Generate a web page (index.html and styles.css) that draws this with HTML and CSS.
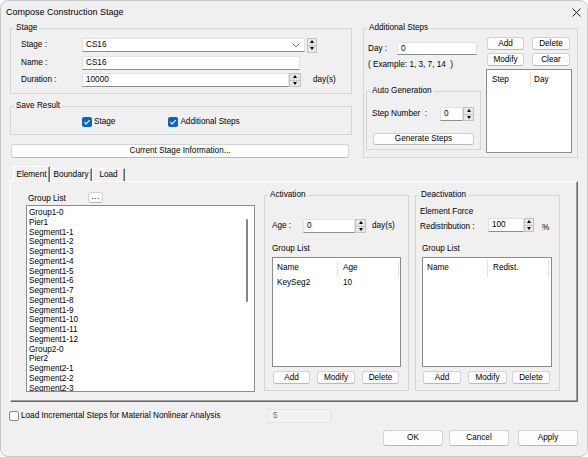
FILE: index.html
```html
<!DOCTYPE html>
<html>
<head>
<meta charset="utf-8">
<title>Compose Construction Stage</title>
<link rel="stylesheet" href="styles.css">
</head>
<body>
<div class="window">
  <div class="titlebar">
    <span class="title">Compose Construction Stage</span>
    <svg class="close" width="9" height="9" viewBox="0 0 9 9"><path d="M0.5 0.5 L8.5 8.5 M8.5 0.5 L0.5 8.5" stroke="#1a1a1a" stroke-width="1" fill="none"/></svg>
  </div>

  <div class="top">
    <div class="left-col">
      <fieldset class="grp stage-grp">
        <legend>Stage</legend>
        <div class="stage-body">
          <div class="frow">
            <span class="flabel">Stage :</span>
            <div class="input select">CS16<svg class="chev" width="8" height="5" viewBox="0 0 8 5"><path d="M0.5 0.5 L4 4 L7.5 0.5" stroke="#7a7a7a" stroke-width="1" fill="none"/></svg></div>
            <div class="spin spin-stage"><span class="up"></span><span class="dn"></span></div>
          </div>
          <div class="frow">
            <span class="flabel">Name :</span>
            <div class="input name-in">CS16</div>
          </div>
          <div class="frow">
            <span class="flabel">Duration :</span>
            <div class="input dur-in">10000</div>
            <div class="spin spin-dur"><span class="up"></span><span class="dn"></span></div>
            <span class="unit">day(s)</span>
          </div>
        </div>
      </fieldset>

      <fieldset class="grp save-grp">
        <legend>Save Result</legend>
        <div class="checks">
          <span class="chk chk-stage"><span class="cbox on"><svg width="10" height="10" viewBox="0 0 10 10"><path d="M2.4 5.2 L4.2 7 L7.7 3.2" stroke="#fff" stroke-width="1.2" fill="none"/></svg></span>Stage</span>
          <span class="chk chk-add"><span class="cbox on"><svg width="10" height="10" viewBox="0 0 10 10"><path d="M2.4 5.2 L4.2 7 L7.7 3.2" stroke="#fff" stroke-width="1.2" fill="none"/></svg></span>Additional Steps</span>
        </div>
      </fieldset>

      <button class="btn info-btn">Current Stage Information...</button>
    </div>

    <fieldset class="grp add-grp">
      <legend>Additional Steps</legend>
      <div class="add-body">
        <div class="add-left">
          <div class="day-row"><span class="day-lbl">Day :</span><div class="input day-in">0</div></div>
          <div class="example">( Example: 1, 3, 7, 14&nbsp; )</div>
          <fieldset class="grp auto-grp">
            <legend>Auto Generation</legend>
            <div class="step-row">
              <span class="step-lbl">Step Number&nbsp; :</span>
              <div class="input step-in">0</div>
              <div class="spin spin-step"><span class="up"></span><span class="dn"></span></div>
            </div>
            <button class="btn gen-btn">Generate Steps</button>
          </fieldset>
        </div>
        <div class="add-right">
          <div class="btn-grid">
            <button class="btn">Add</button>
            <button class="btn">Delete</button>
            <button class="btn">Modify</button>
            <button class="btn">Clear</button>
          </div>
          <div class="list step-list">
            <div class="lv-head">
              <span class="col sc1">Step</span>
              <span class="col sc2">Day</span>
            </div>
          </div>
        </div>
      </div>
    </fieldset>
  </div>

  <div class="tabs">
    <div class="tab active">Element</div>
    <div class="tab t-boundary">Boundary</div>
    <div class="tab t-load">Load</div>
  </div>

  <div class="panel">
    <div class="glist-col">
      <div class="glist-head"><span class="gl-title">Group List</span><button class="btn dots">...</button></div>
      <div class="list glist">
        <div class="items">
          <div>Group1-0</div>
          <div>Pier1</div>
          <div>Segment1-1</div>
          <div>Segment1-2</div>
          <div>Segment1-3</div>
          <div>Segment1-4</div>
          <div>Segment1-5</div>
          <div>Segment1-6</div>
          <div>Segment1-7</div>
          <div>Segment1-8</div>
          <div>Segment1-9</div>
          <div>Segment1-10</div>
          <div>Segment1-11</div>
          <div>Segment1-12</div>
          <div>Group2-0</div>
          <div>Pier2</div>
          <div>Segment2-1</div>
          <div>Segment2-2</div>
          <div>Segment2-3</div>
        </div>
        <div class="sb"><div class="thumb"></div></div>
      </div>
    </div>

    <fieldset class="grp act-grp">
      <legend>Activation</legend>
      <div class="act-body">
        <div class="age-row">
          <span class="age-lbl">Age :</span>
          <div class="input age-in">0</div>
          <div class="spin spin-age"><span class="up"></span><span class="dn"></span></div>
          <span class="unit2">day(s)</span>
        </div>
        <div class="gl-label">Group List</div>
        <div class="list lv">
          <div class="lv-head">
            <span class="col c1">Name</span>
            <span class="col c2">Age</span>
          </div>
          <div class="lv-row"><span class="cell c1">KeySeg2</span><span class="cell c2">10</span></div>
        </div>
        <div class="btn-row">
          <button class="btn b1">Add</button>
          <button class="btn b2">Modify</button>
          <button class="btn b3">Delete</button>
        </div>
      </div>
    </fieldset>

    <fieldset class="grp deact-grp">
      <legend>Deactivation</legend>
      <div class="deact-body">
        <div class="ef-label">Element Force</div>
        <div class="redist-row">
          <span class="redist-lbl">Redistribution :</span>
          <div class="input redist-in">100</div>
          <div class="spin spin-red"><span class="up"></span><span class="dn"></span></div>
          <span class="pct">%</span>
        </div>
        <div class="gl-label">Group List</div>
        <div class="list lv">
          <div class="lv-head">
            <span class="col c1">Name</span>
            <span class="col c2">Redist.</span>
          </div>
        </div>
        <div class="btn-row">
          <button class="btn b1">Add</button>
          <button class="btn b2">Modify</button>
          <button class="btn b3">Delete</button>
        </div>
      </div>
    </fieldset>
  </div>

  <div class="opts">
    <span class="cbox off"></span>
    <span class="opt-lbl">Load Incremental Steps for Material Nonlinear Analysis</span>
    <div class="input dis-in">5</div>
  </div>

  <div class="actions">
    <button class="btn act ok">OK</button>
    <button class="btn act cancel">Cancel</button>
    <button class="btn act apply">Apply</button>
  </div>
</div>
</body>
</html>
```

FILE: styles.css
```css
html, body {
  margin: 0;
  padding: 0;
  background: #ffffff;
}

.window {
  width: 588px;
  height: 457px;
  box-sizing: border-box;
  border: 1px solid #c9c9c9;
  border-radius: 8px;
  background: #f0f0f0;
  overflow: hidden;
  font-family: "Liberation Sans", Arial, sans-serif;
  font-size: 8.2px;
  line-height: 10px;
  color: #000;
}

/* title bar */
.titlebar {
  height: 22px;
  display: flex;
  align-items: center;
  justify-content: space-between;
  padding: 0 6px 0 5px;
}
.title {
  font-size: 9px;
  color: #000;
}
.close {
  display: block;
}

/* group boxes */
.grp {
  margin: 0;
  padding: 0;
  border: 1px solid #d5d5d5;
  box-sizing: border-box;
  min-width: 0;
}
.grp > legend {
  padding: 0 2px;
  margin-left: 3px;
  font-size: 8.2px;
  line-height: 10px;
}

/* inputs */
.input {
  box-sizing: border-box;
  height: 14px;
  background: #fff;
  border: 1px solid #e2e2e2;
  border-bottom-color: #8e8e8e;
  padding-left: 3px;
  line-height: 12px;
  white-space: nowrap;
}

.spin {
  box-sizing: border-box;
  height: 14px;
  display: flex;
  flex-direction: column;
  border: 1px solid #c3c3c3;
  background: #e7e7e7;
}
.spin span {
  flex: 1;
  display: flex;
  align-items: center;
  justify-content: center;
}
.spin .up {
  border-bottom: 1px solid #c3c3c3;
}
.spin span::before {
  content: "";
  width: 0;
  height: 0;
  border-left: 2.5px solid transparent;
  border-right: 2.5px solid transparent;
}
.spin .up::before {
  border-bottom: 3px solid #000;
}
.spin .dn::before {
  border-top: 3px solid #000;
}

/* buttons */
.btn {
  box-sizing: border-box;
  margin: 0;
  padding: 0;
  font-family: inherit;
  font-size: 8.2px;
  line-height: 10px;
  color: #000;
  background: #fdfdfd;
  border: 1px solid #d3d3d3;
  border-bottom-color: #b9b9b9;
  border-radius: 3px;
  display: flex;
  align-items: center;
  justify-content: center;
  white-space: nowrap;
}

/* checkboxes */
.cbox {
  box-sizing: border-box;
  width: 10px;
  height: 10px;
  border-radius: 2px;
  flex: none;
}
.cbox svg {
  display: block;
}
.cbox.on {
  background: #0a64c2;
}
.cbox.off {
  background: #f9f9f9;
  border: 1px solid #8a8a8a;
}

/* top area */
.top {
  display: flex;
  padding-left: 9px;
}
.left-col {
  width: 342px;
  display: flex;
  flex-direction: column;
}
.stage-body {
  padding: 5px 0 6px 10px;
  display: flex;
  flex-direction: column;
  gap: 3.5px;
}
.frow {
  display: flex;
  align-items: center;
  height: 14px;
}
.flabel {
  width: 61px;
  flex: none;
}
.select {
  width: 223px;
  display: flex;
  align-items: center;
  justify-content: space-between;
  padding-right: 4px;
}
.chev {
  display: block;
}
.spin-stage {
  width: 10px;
  margin-left: 2px;
  height: 15px;
}
.name-in {
  width: 218px;
}
.dur-in {
  width: 207px;
}
.spin-dur {
  width: 12px;
}
.unit {
  margin-left: 12px;
}

.save-grp {
  margin-top: 7px;
}
.checks {
  display: flex;
  align-items: center;
  height: 10px;
  margin: 6px 0 7px 0;
}
.chk {
  display: flex;
  align-items: center;
}
.chk .cbox {
  margin-right: 2px;
}
.chk-stage {
  margin-left: 71px;
}
.chk-add {
  margin-left: 53px;
}
.info-btn {
  margin-top: 9px;
  margin-left: 1px;
  width: 338px;
  height: 14px;
}

/* additional steps */
.add-grp {
  margin-left: 11px;
  width: 215px;
}
.add-body {
  display: flex;
  padding: 0 0 3px 2px;
}
.add-left {
  width: 115px;
}
.day-row {
  margin-top: 9px;
  display: flex;
  align-items: center;
  height: 13px;
  padding-left: 2px;
}
.day-lbl {
  width: 29px;
}
.day-in {
  width: 80px;
  height: 13px;
}
.example {
  margin-top: 3px;
  line-height: 13px;
  padding-left: 2px;
}
.auto-grp {
  margin-top: 15px;
  width: 115px;
}
.step-row {
  margin-top: 11px;
  display: flex;
  align-items: center;
  height: 14px;
  padding-left: 5px;
}
.step-lbl {
  width: 68px;
}
.step-in {
  width: 23px;
}
.spin-step {
  width: 11px;
}
.gen-btn {
  margin: 12px 0 4px 6px;
  width: 101px;
  height: 12px;
}
.add-right {
  margin-left: 5px;
  width: 86px;
}
.btn-grid {
  margin: 4px 0 0 1px;
  display: grid;
  grid-template-columns: 37px 38px;
  grid-auto-rows: 13px;
  column-gap: 8px;
  row-gap: 3px;
}
.list {
  box-sizing: border-box;
  background: #fff;
  border: 1px solid #8c8c8c;
}
.step-list {
  margin-top: 3px;
  height: 84px;
}
.lv-head {
  display: flex;
  margin-top: 2px;
  height: 17px;
}
.col {
  box-sizing: border-box;
  border-right: 1px solid #e3e3e3;
  line-height: 15px;
  padding-left: 4px;
}
.step-list .lv-head {
  height: 16px;
}
.sc1 {
  width: 44px;
  padding-left: 5px;
}
.sc2 {
  border-right: none;
  padding-left: 3px;
}

/* tabs */
.tabs {
  display: flex;
  align-items: flex-end;
  height: 15px;
  margin: 8px 0 0 12px;
}
.tab {
  box-sizing: border-box;
  height: 13px;
  border-top: 1px solid #fff;
  border-left: 1px solid #fff;
  border-right: 1px solid #696969;
  box-shadow: inset -1px 0 0 #a0a0a0;
  display: flex;
  align-items: center;
  justify-content: center;
  background: #f0f0f0;
}
.tab.active {
  width: 37px;
  height: 16px;
  margin-bottom: -1px;
  position: relative;
  z-index: 1;
}
.t-boundary {
  width: 42px;
}
.t-load {
  width: 33px;
}

.panel {
  box-sizing: border-box;
  margin-left: 9px;
  width: 568px;
  height: 221px;
  border-top: 1px solid #fff;
  border-left: 1px solid #fff;
  border-right: 1px solid #696969;
  border-bottom: 1px solid #696969;
  box-shadow: inset -1px -1px 0 #a0a0a0;
  display: flex;
  align-items: flex-start;
  padding: 8px 0 0 15px;
}
.glist-col {
  margin-top: 2px;
  width: 229px;
}
.glist-head {
  display: flex;
  align-items: flex-end;
  height: 12px;
}
.gl-title {
  width: 60px;
  padding-left: 2px;
}
.dots {
  width: 15px;
  height: 11px;
  align-self: flex-start;
  letter-spacing: 0.5px;
  line-height: 6px;
  align-items: flex-start;
  padding-top: 1px;
}
.glist {
  margin-top: 1px;
  height: 187px;
  display: flex;
  overflow: hidden;
}
.items {
  flex: 1;
  padding: 2px 0 0 2px;
  line-height: 9.75px;
  overflow: hidden;
}
.sb {
  width: 10px;
}
.thumb {
  margin: 13px 0 0 2px;
  width: 2px;
  height: 83px;
  border-radius: 1px;
  background: #858585;
}

.act-grp {
  margin-left: 9px;
  width: 145px;
  height: 201px;
}
.act-body {
  padding-left: 7px;
}
.age-row {
  margin-top: 19px;
  display: flex;
  align-items: center;
  height: 14px;
}
.age-lbl {
  width: 31px;
}
.age-in {
  width: 52px;
}
.spin-age {
  width: 11px;
}
.unit2 {
  margin-left: 6px;
}
.gl-label {
  margin-top: 11px;
  line-height: 10px;
}
.lv {
  margin-top: 3px;
  height: 110px;
  width: 129px;
}
.c1 {
  width: 65px;
}
.c2 {
  width: 61px;
  padding-left: 5px;
}
.lv-row {
  display: flex;
  margin-top: 1px;
  line-height: 10px;
}
.cell {
  box-sizing: border-box;
  padding-left: 4px;
}
.cell.c2 {
  padding-left: 5px;
}
.btn-row {
  margin: 4px 0 0 1px;
  display: flex;
  height: 13px;
}
.btn-row .b1 { width: 37px; }
.btn-row .b2 { width: 38px; margin-left: 7px; }
.btn-row .b3 { width: 37px; margin-left: 7px; }

.deact-grp {
  margin-left: 6px;
  width: 145px;
  height: 201px;
}
.deact-body {
  padding-left: 4px;
}
.ef-label {
  margin-top: 7px;
  line-height: 10px;
}
.redist-row {
  margin-top: 1px;
  display: flex;
  align-items: flex-end;
  height: 14px;
}
.redist-lbl {
  width: 68px;
  line-height: 10px;
}
.redist-in {
  width: 36px;
}
.spin-red {
  width: 10px;
}
.pct {
  margin-left: 8px;
  line-height: 10px;
  margin-bottom: -1px;
}
.deact-body .gl-label {
  margin-top: 12px;
  padding-left: 2px;
}
.deact-body .lv {
  margin-left: 2px;
  width: 130px;
}
.deact-body .btn-row {
  margin-left: 3px;
}
.deact-body .btn-row .b1 { width: 38px; }
.deact-body .btn-row .b2 { width: 39px; margin-left: 7px; }
.deact-body .btn-row .b3 { width: 38px; margin-left: 5px; }

/* bottom */
.opts {
  margin: 7px 0 0 8px;
  display: flex;
  align-items: center;
  height: 14px;
}
.opt-lbl {
  margin-left: 2px;
  width: 246px;
}
.dis-in {
  width: 64px;
  background: #f3f3f3;
  border: 1px solid #e6e6e6;
  color: #6d6d6d;
  padding-left: 5px;
}
.actions {
  margin-top: 7px;
  display: flex;
  justify-content: flex-end;
  padding-right: 9px;
  height: 16px;
}
.act {
  width: 60px;
  height: 16px;
}
.cancel {
  margin-left: 6px;
}
.apply {
  margin-left: 9px;
}
```
